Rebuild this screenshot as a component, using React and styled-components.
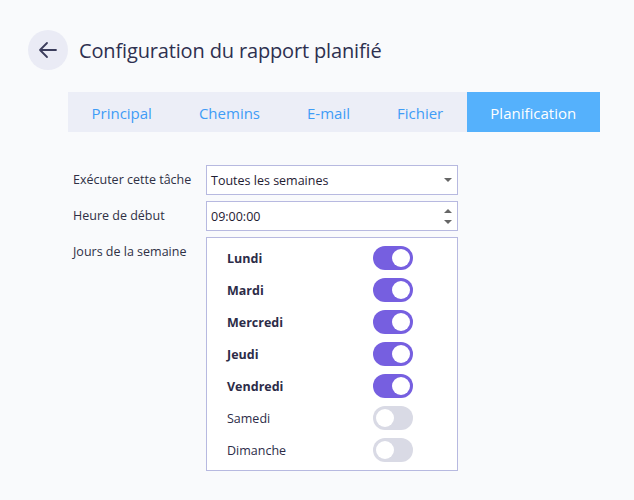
import styled, { createGlobalStyle } from "styled-components";

const GlobalStyle = createGlobalStyle`
  body {
    margin: 0;
    background: #f9fafc;
    font-family: "Open Sans", "Noto Sans", sans-serif;
  }
`;

const days = [
  { name: "Lundi", on: true },
  { name: "Mardi", on: true },
  { name: "Mercredi", on: true },
  { name: "Jeudi", on: true },
  { name: "Vendredi", on: true },
  { name: "Samedi", on: false },
  { name: "Dimanche", on: false },
];

const tabs = ["Principal", "Chemins", "E-mail", "Fichier", "Planification"];

const App = () => {
  return (
    <Page>
      <GlobalStyle />
      <Header>
        <BackButton>
          <svg width="20" height="20" viewBox="0 0 20 20" fill="none">
            <path
              d="M18 10H2M9 3L2 10l7 7"
              stroke="#3b3d5c"
              strokeWidth="1.8"
              strokeLinecap="round"
              strokeLinejoin="round"
            />
          </svg>
        </BackButton>
        <Title>Configuration du rapport planifié</Title>
      </Header>

      <TabBar>
        {tabs.map((t) => (
          <Tab key={t} active={t === "Planification"}>
            {t}
          </Tab>
        ))}
      </TabBar>

      <Form>
        <Label>Exécuter cette tâche</Label>
        <Field>
          <FieldText>Toutes les semaines</FieldText>
          <Caret viewBox="0 0 8 4">
            <path d="M0 0h8L4 4z" fill="#666" />
          </Caret>
        </Field>

        <Label>Heure de début</Label>
        <Field>
          <FieldText>09:00:00</FieldText>
          <Spinner>
            <Caret viewBox="0 0 8 4">
              <path d="M0 4h8L4 0z" fill="#666" />
            </Caret>
            <Caret viewBox="0 0 8 4">
              <path d="M0 0h8L4 4z" fill="#666" />
            </Caret>
          </Spinner>
        </Field>

        <Label>Jours de la semaine</Label>
        <DaysBox>
          {days.map((d) => (
            <DayRow key={d.name}>
              <DayName on={d.on}>{d.name}</DayName>
              <Toggle on={d.on}>
                <Knob on={d.on} />
              </Toggle>
            </DayRow>
          ))}
        </DaysBox>
      </Form>
    </Page>
  );
};

const Page = styled.div`
  padding: 30px 28px;
`;

const Header = styled.div`
  display: flex;
  align-items: center;
  gap: 11px;
`;

const BackButton = styled.div`
  width: 40px;
  height: 40px;
  border-radius: 50%;
  background: #eaebf5;
  display: flex;
  align-items: center;
  justify-content: center;
`;

const Title = styled.h1`
  margin: 0;
  font-size: 20px;
  font-weight: 400;
  color: #2e3050;
  letter-spacing: -0.15px;
`;

const TabBar = styled.div`
  display: flex;
  width: fit-content;
  margin: 22px 0 0 40px;
  background: #eceef7;
`;

const Tab = styled.div`
  height: 40px;
  box-sizing: border-box;
  display: flex;
  align-items: center;
  justify-content: center;
  padding: 1px 23.5px 0;
  font-size: 15px;
  color: ${(p) => (p.active ? "#ffffff" : "#3f9cf6")};
  background: ${(p) => (p.active ? "#55b1fc" : "transparent")};
  ${(p) => (p.active ? "width: 133px; padding: 1px 0 0;" : "")}
`;

const Form = styled.div`
  display: grid;
  grid-template-columns: 133px 252px;
  row-gap: 6px;
  margin: 33px 0 0 45px;
`;

const Label = styled.div`
  font-size: 12.5px;
  color: #2f3045;
  padding-top: 6px;
  line-height: 18px;
`;

const Field = styled.div`
  height: 30px;
  box-sizing: border-box;
  border: 1px solid #b7b9e0;
  background: #fff;
  display: flex;
  align-items: center;
  padding: 0 5px 0 4px;
`;

const FieldText = styled.span`
  flex: 1;
  font-size: 12.5px;
  color: #1f2033;
`;

const Caret = styled.svg`
  width: 8px;
  height: 4px;
  display: block;
`;

const Spinner = styled.div`
  display: flex;
  flex-direction: column;
  justify-content: space-between;
  height: 100%;
  padding: 7px 0 6px;
  box-sizing: border-box;
`;

const DaysBox = styled.div`
  border: 1px solid #b7b9e0;
  background: #fff;
  padding: 4px 0;
`;

const DayRow = styled.div`
  height: 32px;
  display: flex;
  align-items: center;
  padding-left: 20px;
`;

const DayName = styled.span`
  width: 146px;
  font-size: 12.5px;
  font-weight: ${(p) => (p.on ? 700 : 400)};
  color: #2c2c48;
`;

const Toggle = styled.div`
  width: 40px;
  height: 24px;
  border-radius: 12px;
  background: ${(p) => (p.on ? "#765fe0" : "#d9dae5")};
  position: relative;
`;

const Knob = styled.div`
  position: absolute;
  top: 3px;
  left: ${(p) => (p.on ? "19px" : "3px")};
  width: 18px;
  height: 18px;
  border-radius: 50%;
  background: #fff;
`;

export default App;
